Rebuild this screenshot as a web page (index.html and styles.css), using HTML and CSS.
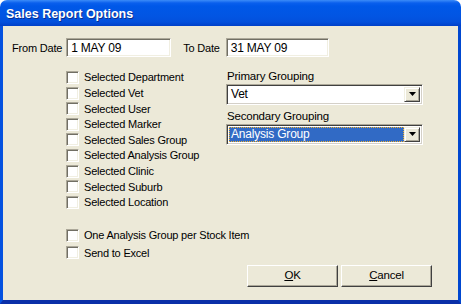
FILE: index.html
```html
<!DOCTYPE html>
<html>
<head>
  <meta charset="UTF-8">
  <title>Sales Report Options</title>
  <link rel="stylesheet" href="styles.css">
</head>
<body>
  <div class="window">
    <div class="titlebar">Sales Report Options</div>
    <div class="client">
      <div class="dates">
        <span class="lbl from">From Date</span>
        <span class="field date1">1 MAY 09</span>
        <span class="lbl to">To Date</span>
        <span class="field date2">31 MAY 09</span>
      </div>

      <div class="middle">
        <div class="checks">
          <div class="check"><span class="box"></span>Selected Department</div>
          <div class="check"><span class="box"></span>Selected Vet</div>
          <div class="check"><span class="box"></span>Selected User</div>
          <div class="check"><span class="box"></span>Selected Marker</div>
          <div class="check"><span class="box"></span>Selected Sales Group</div>
          <div class="check"><span class="box"></span>Selected Analysis Group</div>
          <div class="check"><span class="box"></span>Selected Clinic</div>
          <div class="check"><span class="box"></span>Selected Suburb</div>
          <div class="check"><span class="box"></span>Selected Location</div>
        </div>

        <div class="groupings">
          <div class="glabel first">Primary Grouping</div>
          <div class="combo">
            <span class="combo-text">Vet</span>
            <span class="drop"><svg width="7" height="4" viewBox="0 0 7 4"><path d="M0 0h7L3.5 4z" fill="#000"/></svg></span>
          </div>
          <div class="glabel">Secondary Grouping</div>
          <div class="combo focused">
            <span class="combo-text">Analysis Group</span>
            <span class="drop"><svg width="7" height="4" viewBox="0 0 7 4"><path d="M0 0h7L3.5 4z" fill="#000"/></svg></span>
          </div>
        </div>
      </div>

      <div class="checks extra">
        <div class="check"><span class="box"></span>One Analysis Group per Stock Item</div>
        <div class="check"><span class="box"></span>Send to Excel</div>
      </div>

      <div class="buttons">
        <span class="btn"><u>O</u>K</span>
        <span class="btn"><u>C</u>ancel</span>
      </div>
    </div>
  </div>
</body>
</html>
```

FILE: styles.css
```css
body {
  margin: 0;
  background: #fff;
  font-family: "Liberation Sans", Arial, sans-serif;
  font-size: 11px;
  letter-spacing: -0.2px;
  color: #000;
}

.window {
  width: 461px;
  height: 304px;
  display: flex;
  flex-direction: column;
}

.titlebar {
  height: 26px;
  flex: none;
  box-sizing: border-box;
  padding: 6px 0 0 6px;
  border-radius: 7px 7px 0 0;
  background: linear-gradient(#3c8cf8 0px, #0a5fed 3px, #0058e8 6px, #0255e3 16px, #0350dc 22px, #0140c8 26px);
  color: #fff;
  font-weight: bold;
  font-size: 12.5px;
  letter-spacing: 0;
  line-height: 16px;
  text-shadow: 1px 1px #0b2f8e;
}

.client {
  flex: 1;
  background: #ece9d8;
  border-left: 3px solid #0552e0;
  border-right: 3px solid #0047d0;
  border-bottom: 4px solid #0a2fa8;
  display: flex;
  flex-direction: column;
}

/* date row */
.dates {
  display: flex;
  align-items: center;
  padding: 12px 0 0 9px;
}

.lbl.from { margin-right: 4px; }
.lbl.to { margin: 0 6px 0 12px; }

.field {
  box-sizing: border-box;
  height: 19px;
  background: #fff;
  border-top: 1px solid #aca899;
  border-left: 1px solid #aca899;
  border-right: 1px solid #fff;
  border-bottom: 1px solid #fff;
  box-shadow: inset 1px 1px #716f64, inset -1px -1px #f1efe2;
  padding: 2px 0 0 4px;
  font-size: 12px;
  line-height: 14px;
}
.date1 { width: 105px; }
.date2 { width: 103px; }

/* checkboxes */
.middle {
  display: flex;
}

.checks {
  margin: 12.7px 0 0 63px;
  width: 160px;
}

.check {
  height: 15.6px;
  display: flex;
  align-items: center;
  white-space: nowrap;
}

.box {
  width: 13px;
  height: 13px;
  box-sizing: border-box;
  background: #fff;
  border-top: 1px solid #aca899;
  border-left: 1px solid #aca899;
  border-right: 1px solid #fff;
  border-bottom: 1px solid #fff;
  box-shadow: inset 1px 1px #716f64, inset -1px -1px #f1efe2;
  margin-right: 5px;
  flex: none;
}

.checks.extra {
  margin-top: 16.5px;
}
.checks.extra .check {
  height: 17.5px;
}

/* grouping combos */
.groupings {
  width: 197px;
}

.glabel {
  font-size: 11.5px;
  line-height: 14px;
  margin: 4px 0 1px 1px;
}
.glabel.first { margin-top: 11.7px; }

.combo {
  box-sizing: border-box;
  height: 21px;
  display: flex;
  background: #fff;
  border-top: 1px solid #aca899;
  border-left: 1px solid #aca899;
  border-right: 1px solid #fff;
  border-bottom: 1px solid #fff;
  box-shadow: inset 1px 1px #404040, inset -1px -1px #d4d0c8;
  padding: 2px;
}

.combo-text {
  flex: 1;
  padding-left: 2px;
  font-size: 12px;
  line-height: 15px;
}

.combo.focused .combo-text {
  background: #316ac5;
  color: #fff;
  outline: 1px dotted #f0b030;
  outline-offset: -1px;
}

.drop {
  width: 16px;
  box-sizing: border-box;
  background: #ece9d8;
  border-top: 1px solid #f1efe2;
  border-left: 1px solid #f1efe2;
  border-right: 1px solid #404040;
  border-bottom: 1px solid #404040;
  box-shadow: inset 1px 1px #fff, inset -1px -1px #aca899;
  display: flex;
  align-items: center;
  justify-content: center;
}

/* buttons */
.buttons {
  display: flex;
  justify-content: flex-end;
  gap: 3px;
  margin-top: 3.4px;
  padding-right: 26px;
}

.btn {
  width: 91px;
  height: 22px;
  box-sizing: border-box;
  background: #ece9d8;
  border-top: 1px solid #fff;
  border-left: 1px solid #fff;
  border-right: 1px solid #404040;
  border-bottom: 1px solid #404040;
  box-shadow: inset -1px -1px #aca899;
  text-align: center;
  line-height: 19px;
  font-size: 11.5px;
}
```
